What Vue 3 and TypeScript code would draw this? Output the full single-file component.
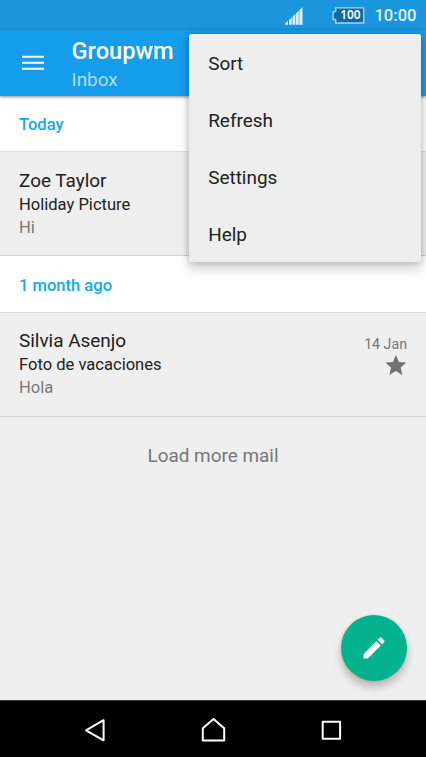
<script setup lang="ts">
interface Mail {
  sender: string
  subject: string
  preview: string
  date?: string
  starred?: boolean
}

interface MailGroup {
  label: string
  mails: Mail[]
}

const groups: MailGroup[] = [
  {
    label: 'Today',
    mails: [{ sender: 'Zoe Taylor', subject: 'Holiday Picture', preview: 'Hi' }],
  },
  {
    label: '1 month ago',
    mails: [
      { sender: 'Silvia Asenjo', subject: 'Foto de vacaciones', preview: 'Hola', date: '14 Jan', starred: true },
    ],
  },
]

const menuItems: string[] = ['Sort', 'Refresh', 'Settings', 'Help']
</script>

<template>
  <div class="screen">
    <div class="status-bar">
      <svg class="signal" width="18" height="18" viewBox="0 0 18 18">
        <path d="M0 17.8v-1l3-2.7v3.7zM4 17.8v-4.7l2.8-2.6v7.3zM7.500 17.8V9.5l2.900-2.6v10.9zM11 17.8V6.200l2.700-2.400v14zM14.300 17.800V3.100L17.500 0v17.800z" />
      </svg>
      <div class="battery">
        <svg width="33" height="17" viewBox="0 0 33 17">
          <path d="M3.700.8H31.700V16H3.700V12.500H1.200V4.600H3.700z" />
        </svg>
        <span>100</span>
      </div>
      <span class="clock">10:00</span>
    </div>

    <header class="app-bar">
      <svg class="hamburger" width="22" height="16" viewBox="0 0 22 16">
        <path d="M0 1.700h22M0 7.700h22M0 13.700h22" />
      </svg>
      <div class="titles">
        <h1>Groupwm</h1>
        <p>Inbox</p>
      </div>
    </header>

    <main class="content">
      <section v-for="group in groups" :key="group.label">
        <h2 class="group-label">{{ group.label }}</h2>
        <article v-for="mail in group.mails" :key="mail.sender" class="mail">
          <div class="mail-text">
            <div class="sender">{{ mail.sender }}</div>
            <div class="subject">{{ mail.subject }}</div>
            <div class="preview">{{ mail.preview }}</div>
          </div>
          <div class="mail-meta">
            <span v-if="mail.date">{{ mail.date }}</span>
            <svg v-if="mail.starred" width="22" height="20" viewBox="1.700 2 20.900 19">
              <path d="M12 17.270L18.180 21l-1.640-7.030L22 9.240l-7.190-.61L12 2 9.190 8.630 2 9.240l5.460 4.730L5.820 21z" />
            </svg>
          </div>
        </article>
      </section>
      <div class="load-more">Load more mail</div>
    </main>

    <button class="compose" aria-label="Compose">
      <svg width="28" height="28" viewBox="0 0 24 24">
        <path d="M3 17.250V21h3.750L17.810 9.940l-3.750-3.750L3 17.250zM20.710 7.040c.39-.39.39-1.020 0-1.410l-2.340-2.340c-.39-.39-1.020-.39-1.410 0l-1.830 1.830 3.750 3.750 1.830-1.830z" />
      </svg>
    </button>

    <nav class="nav-bar">
      <svg width="24" height="26" viewBox="0 0 24 26">
        <path d="M20.600 3.200V23.300L3 13.300z" />
      </svg>
      <svg width="26" height="26" viewBox="0 0 26 26">
        <path d="M1.800 23.500V11.300L12.500 2l10.700 9.300v12.200z" />
      </svg>
      <svg width="22" height="26" viewBox="0 0 22 26">
        <path d="M2.700 4.700h17.400v17H2.700z" />
      </svg>
    </nav>

    <div class="menu">
      <div v-for="item in menuItems" :key="item" class="menu-item">{{ item }}</div>
    </div>
  </div>
</template>

<style>
body {
  margin: 0;
}
</style>

<style scoped>
.screen {
  position: relative;
  display: flex;
  flex-direction: column;
  width: 426px;
  height: 757px;
  overflow: hidden;
  background: #efefef;
  color: #212121;
  font-family: Roboto, "Liberation Sans", sans-serif;
}

.status-bar {
  display: flex;
  align-items: center;
  justify-content: flex-end;
  box-sizing: border-box;
  height: 30px;
  padding: 1px 9.500px 0 0;
  background: #1b96dc;
  color: #e4f2fb;
}

.signal {
  margin-right: 29.500px;
  fill: #e0f1fb;
}

.battery {
  display: grid;
  margin-right: 9px;
}

.battery > * {
  grid-area: 1 / 1;
}

.battery svg {
  fill: #136a9b;
  stroke: #a5d5f1;
  stroke-width: 1.300;
}

.battery span {
  padding-left: 3px;
  color: #fff;
  font-family: "Noto Sans", "Open Sans", sans-serif;
  font-size: 11.800px;
  font-weight: 600;
  line-height: 15px;
  text-align: center;
}

.clock {
  font-size: 16.600px;
  font-weight: 500;
  line-height: 20px;
}

.app-bar {
  position: relative;
  display: flex;
  box-sizing: border-box;
  height: 66px;
  padding-left: 22px;
  background: #159ceb;
  box-shadow: 0 1px 3px rgba(0, 0, 0, 0.45);
}

.hamburger {
  margin-top: 25px;
  stroke: #fff;
  stroke-width: 2;
}

.titles {
  padding: 7px 0 0 27.500px;
}

.titles h1 {
  margin: 0;
  color: #fff;
  font-size: 23.670px;
  font-weight: 500;
  line-height: 29px;
}

.titles p {
  margin: 0;
  color: #b0def8;
  font-size: 18.900px;
  line-height: 27px;
}

.content {
  flex: 1;
}

.group-label {
  box-sizing: border-box;
  height: 56px;
  margin: 0;
  padding-left: 19px;
  border-bottom: 1px solid #dedede;
  background: #fff;
  color: #12a8fb;
  font-size: 16.560px;
  font-weight: 500;
  line-height: 57px;
}

.mail {
  display: flex;
  justify-content: space-between;
  box-sizing: border-box;
  height: 104px;
  padding: 17px 19px 0;
  border-bottom: 1px solid #d2d2d2;
}

section + section .group-label {
  height: 57px;
  line-height: 59px;
}

section + section .mail {
  padding-top: 16px;
}

.sender {
  font-size: 18.930px;
  line-height: 24px;
}

.subject {
  font-size: 16.560px;
  line-height: 23px;
}

section + section .subject {
  padding-top: 1px;
  line-height: 22px;
}

.preview {
  color: #777;
  font-size: 16.560px;
  line-height: 23px;
}

.mail-meta {
  display: flex;
  flex-direction: column;
  align-items: flex-end;
  padding-top: 5px;
  color: #757575;
  font-size: 14.200px;
  line-height: 20px;
}

.mail-meta svg {
  margin-top: 1px;
  fill: #717171;
}

.load-more {
  color: #777;
  font-size: 18.930px;
  line-height: 78px;
  text-align: center;
}

.compose {
  position: absolute;
  right: 19px;
  bottom: 76px;
  display: grid;
  place-items: center;
  width: 66px;
  height: 66px;
  padding: 0;
  border: 0;
  border-radius: 50%;
  background: #04b28d;
  box-shadow: 0 6px 9px rgba(0, 0, 0, 0.24), 0 0 3px rgba(0, 0, 0, 0.1);
}

.compose svg {
  fill: #fff;
}

.nav-bar {
  display: flex;
  align-items: center;
  justify-content: space-between;
  box-sizing: border-box;
  height: 57px;
  padding: 2px 84px 0 83px;
  border-top: 1px solid #333;
  background: #000;
}

.nav-bar svg {
  fill: none;
  stroke: #fff;
  stroke-width: 2;
  stroke-linejoin: round;
}

.menu {
  position: absolute;
  top: 34.400px;
  left: 189.400px;
  width: 231.800px;
  border-radius: 2px;
  background: #eee;
  box-shadow: 0 7px 12px rgba(0, 0, 0, 0.18), 0 0 6px rgba(0, 0, 0, 0.2);
}

.menu-item {
  height: 56.800px;
  padding-left: 18.800px;
  font-size: 18.930px;
  line-height: 59px;
}
</style>
